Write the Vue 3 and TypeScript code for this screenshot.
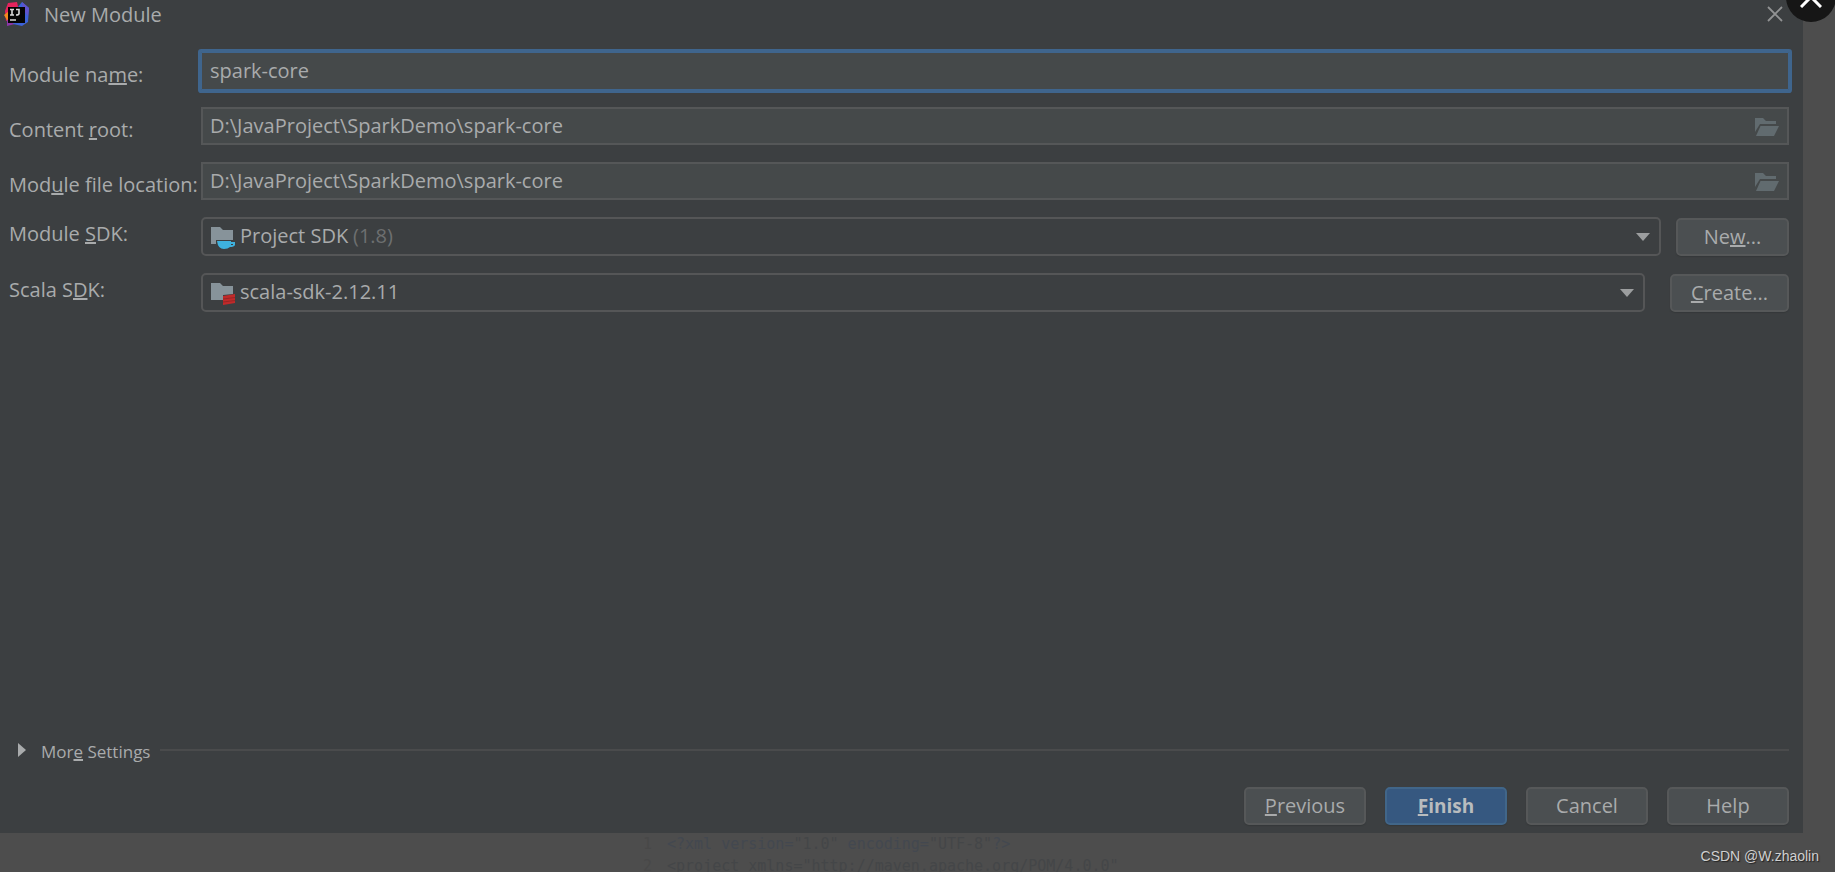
<script setup lang="ts">
import { ref } from 'vue'

const moduleName = ref('spark-core')
const contentRoot = ref('D:\\JavaProject\\SparkDemo\\spark-core')
const fileLocation = ref('D:\\JavaProject\\SparkDemo\\spark-core')
const moduleSdk = ref('Project SDK')
const scalaSdk = ref('scala-sdk-2.12.11')
</script>

<template>
  <div class="screen">
    <main class="dialog">
      <header class="titlebar">
        <svg class="logo" viewBox="0 0 25 24" aria-hidden="true">
          <path d="M4 1 13 0 16 14 2 19 1 9Z" fill="#e4235d" />
          <path d="M0 13 5 9 7 17 3 18Z" fill="#f28a1e" />
          <path d="M3 18 10 17 11 22 3 24Z" fill="#8c35a8" />
          <path d="M14 5 18 0 25 6 24 20 18 24 9 22Z" fill="#3c62d8" />
          <path d="M18 0 25 6 24 14 19 8Z" fill="#6153cc" />
          <rect x="4" y="5" width="17" height="16" fill="#050505" />
          <path d="M6 7.500h4M8 7.500v5M6 13h4M12 7.500h3v4q0 1.500-3 1.500M6 18h6" fill="none" stroke="#d8d8d8" stroke-width="1.600" />
        </svg>
        <h1>New Module</h1>
        <button class="close" type="button" aria-label="Close">
          <svg viewBox="0 0 16 16"><path d="M1 1 15 15M15 1 1 15" fill="none" stroke="#929394" stroke-width="1.800" /></svg>
        </button>
      </header>

      <form class="form" @submit.prevent>
        <div class="row">
          <label class="low" for="name">Module na<u>m</u>e:</label>
          <input id="name" v-model="moduleName" class="field focused" type="text" />
        </div>
        <div class="row">
          <label class="low" for="root">Content <u>r</u>oot:</label>
          <div class="browse">
            <input id="root" v-model="contentRoot" class="field" type="text" />
            <button type="button" aria-label="Browse content root">
              <svg viewBox="0 0 24 18"><path d="M0 0h8l3 3h10v3H5L0 14Z" /><path d="M5.500 8H24l-5 10H1Z" /></svg>
            </button>
          </div>
        </div>
        <div class="row">
          <label class="low" for="location">Mod<u>u</u>le file location:</label>
          <div class="browse">
            <input id="location" v-model="fileLocation" class="field" type="text" />
            <button type="button" aria-label="Browse module file location">
              <svg viewBox="0 0 24 18"><path d="M0 0h8l3 3h10v3H5L0 14Z" /><path d="M5.500 8H24l-5 10H1Z" /></svg>
            </button>
          </div>
        </div>
        <div class="row">
          <label class="high" for="sdk">Module <u>S</u>DK:</label>
          <div class="combo">
            <select id="sdk" v-model="moduleSdk"><option>Project SDK</option></select>
            <svg class="folder" viewBox="0 0 24 22" aria-hidden="true">
              <path d="M0 0h9l3 3h10v10H5v4H0Z" fill="#87939a" />
              <path d="M6 14h14v1h4v3q-1 2-5 2-2 2-6 2-6 0-7-8Zm14 3v1h2v-1Z" fill="#3eb1dd" fill-rule="evenodd" />
            </svg>
            <span class="version">(1.8)</span>
            <svg class="arrow" viewBox="0 0 14 8" aria-hidden="true"><path d="M0 0h14L7 8Z" /></svg>
          </div>
          <button class="btn new" type="button">Ne<u>w</u>...</button>
        </div>
        <div class="row">
          <label class="high" for="scala">Scala S<u>D</u>K:</label>
          <div class="combo">
            <select id="scala" v-model="scalaSdk"><option>scala-sdk-2.12.11</option></select>
            <svg class="folder" viewBox="0 0 24 22" aria-hidden="true">
              <path d="M0 0h9l3 3h10v8l-10 1v5H0Z" fill="#87939a" />
              <path d="M12 13 24 11v9l-12 2Z" fill="#c02a2a" />
              <path d="M12 16 24 14.500M12 19 24 17.500" stroke="#8e2425" stroke-width="0.800" />
            </svg>
            <svg class="arrow" viewBox="0 0 14 8" aria-hidden="true"><path d="M0 0h14L7 8Z" /></svg>
          </div>
          <button class="btn create" type="button"><u>C</u>reate...</button>
        </div>
      </form>

      <div class="more">
        <button type="button" aria-expanded="false">
          <svg viewBox="0 0 8 14" aria-hidden="true"><path d="M0 0 8 7 0 14Z" /></svg>
          <span>Mor<u>e</u> Settings</span>
        </button>
        <hr />
      </div>

      <footer class="actions">
        <button class="btn" type="button"><u>P</u>revious</button>
        <button class="btn primary" type="button"><u>F</u>inish</button>
        <button class="btn" type="button">Cancel</button>
        <button class="btn" type="button">Help</button>
      </footer>
    </main>

    <div class="backdrop">
      <ol class="code">
        <li><span class="num">1</span><code><i>&lt;?xml version=</i>"1.0"<i> encoding=</i>"UTF-8"<i>?&gt;</i></code></li>
        <li><span class="num">2</span><code>&lt;project xmlns="http://maven.apache.org/POM/4.0.0"</code></li>
      </ol>
      <p class="credit">CSDN @W.zhaolin</p>
    </div>

    <button class="dismiss" type="button" aria-label="Close preview">
      <svg viewBox="0 0 22 22"><path d="M1 1 21 21M21 1 1 21" fill="none" stroke="#fff" stroke-width="3" /></svg>
    </button>
  </div>
</template>

<style>
body {
  background: #4d4d4d;
}
</style>

<style scoped>
* {
  box-sizing: border-box;
}
.screen {
  position: relative;
  display: flex;
  flex-direction: column;
  height: 100vh;
  overflow: hidden;
  background: #4d4d4d;
  color: #a9abac;
  font: 20px/28px "Open Sans", "Noto Sans", sans-serif;
}
.dialog {
  flex: 1;
  display: flex;
  flex-direction: column;
  margin-right: 32px;
  padding-bottom: 8px;
  background: #3c3f41;
}
button,
input,
select {
  margin: 0;
  padding: 0;
  border: 0;
  background: none;
  color: inherit;
  font: inherit;
}
svg {
  display: block;
}
u {
  text-decoration-thickness: 2px;
  text-underline-offset: 1px;
  text-decoration-skip-ink: none;
}
.titlebar {
  display: flex;
  align-items: center;
  height: 28px;
  padding: 0 20px 0 4px;
}
.logo {
  width: 25px;
  height: 24px;
}
h1 {
  flex: 1;
  margin: 2px 0 0 15px;
  font-size: 20px;
  font-weight: 400;
}
.close svg {
  width: 16px;
  height: 16px;
}
.form {
  display: flex;
  flex-direction: column;
  gap: 17px;
  padding: 24px 14px 0 9px;
}
.row {
  display: flex;
  align-items: center;
}
label {
  flex: none;
  width: 192px;
  white-space: nowrap;
}
.low {
  padding-top: 8px;
}
.high {
  padding-bottom: 5px;
}
.field {
  display: block;
  flex: 1;
  width: 100%;
  height: 38px;
  padding: 0 40px 2px 7px;
  border: 2px solid #555758;
  background: #45494a;
  outline: 0;
}
.focused {
  border: 1px solid #3f658d;
  padding-left: 8px;
  box-shadow: 0 0 0 3px #3f658d;
  border-radius: 1px;
}
.browse {
  position: relative;
  flex: 1;
}
.browse button {
  position: absolute;
  right: 10px;
  top: 11px;
}
.browse svg {
  width: 24px;
  height: 18px;
  fill: #616b6f;
}
.combo {
  position: relative;
  flex: 1;
}
select {
  display: block;
  width: 100%;
  height: 39px;
  padding: 0 40px 2px 37px;
  appearance: none;
  border: 2px solid #555657;
  border-radius: 5px;
  background: #3c3f41;
}
.folder {
  position: absolute;
  left: 10px;
  top: 10px;
  width: 24px;
  height: 22px;
  pointer-events: none;
}
.version {
  position: absolute;
  left: 152px;
  top: 5px;
  color: #6d6f70;
  pointer-events: none;
}
.arrow {
  position: absolute;
  right: 11px;
  top: 16px;
  width: 14px;
  height: 8px;
  fill: #9c9e9f;
  pointer-events: none;
}
.btn {
  width: 122px;
  height: 38px;
  border: 2px solid #565859;
  border-radius: 5px;
  background: #4b4f51;
  box-shadow: 0 1px 1px #35383a;
}
.new {
  width: 113px;
  margin-left: 15px;
}
.create {
  width: 119px;
  margin-left: 25px;
}
.primary {
  border-color: #416689;
  background: #365880;
  color: #b9bcbe;
  font-size: 19px;
  font-weight: 700;
}
.more {
  display: flex;
  align-items: center;
  margin-top: auto;
  padding: 0 14px 0 18px;
  font-size: 17px;
}
.more button {
  display: flex;
  align-items: center;
  gap: 15px;
}
.more svg {
  width: 8px;
  height: 14px;
  margin-bottom: 4px;
  fill: #a9abac;
}
hr {
  flex: 1;
  margin: 0 0 4px 10px;
  border: 0;
  border-top: 2px solid #4a4b4c;
}
.actions {
  display: flex;
  justify-content: flex-end;
  gap: 19px;
  padding: 21px 14px 0;
}
.backdrop {
  display: flex;
  height: 39px;
  padding: 0 16px 0 643px;
}
.code {
  flex: 1;
  margin: 0;
  padding: 0;
  list-style: none;
  color: #444648;
  font: 15px/22px "DejaVu Sans Mono", monospace;
}
.code li {
  display: flex;
  height: 22px;
  white-space: pre;
}
.code code {
  font: inherit;
}
.code i {
  color: #434850;
  font-style: normal;
}
.num {
  width: 24px;
  color: #484848;
}
.credit {
  margin: 12px 0 0;
  color: #d0d0d0;
  font: 14px/22px "Liberation Sans", Arial, sans-serif;
  text-shadow: 1px 1px 1px #222;
}
.dismiss {
  position: absolute;
  right: -1px;
  top: -28px;
  display: flex;
  align-items: center;
  justify-content: center;
  width: 50px;
  height: 50px;
  border-radius: 50%;
  background: #161616;
}
.dismiss svg {
  width: 22px;
  height: 22px;
}
</style>
